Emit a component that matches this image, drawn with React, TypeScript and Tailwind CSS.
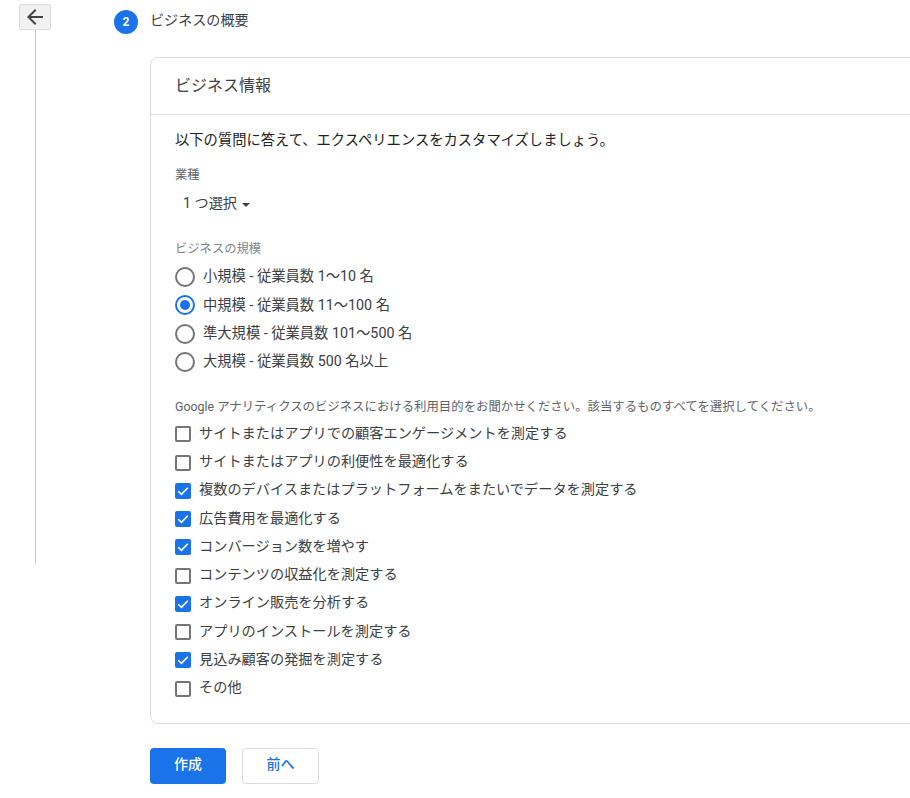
import React from 'react';

const sizes = [
  { label: '小規模 - 従業員数 1～10 名', checked: false },
  { label: '中規模 - 従業員数 11～100 名', checked: true },
  { label: '準大規模 - 従業員数 101～500 名', checked: false },
  { label: '大規模 - 従業員数 500 名以上', checked: false },
];

const purposes = [
  { label: 'サイトまたはアプリでの顧客エンゲージメントを測定する', checked: false },
  { label: 'サイトまたはアプリの利便性を最適化する', checked: false },
  { label: '複数のデバイスまたはプラットフォームをまたいでデータを測定する', checked: true },
  { label: '広告費用を最適化する', checked: true },
  { label: 'コンバージョン数を増やす', checked: true },
  { label: 'コンテンツの収益化を測定する', checked: false },
  { label: 'オンライン販売を分析する', checked: true },
  { label: 'アプリのインストールを測定する', checked: false },
  { label: '見込み顧客の発掘を測定する', checked: true },
  { label: 'その他', checked: false },
];

function Radio({ checked }: { checked: boolean }) {
  return (
    <span className={`w-5 h-5 rounded-full border-2 flex items-center justify-center shrink-0 ${checked ? 'border-[#1a73e8]' : 'border-[#757575]'}`}>
      {checked && <span className="w-2.5 h-2.5 rounded-full bg-[#1a73e8]" />}
    </span>
  );
}

function Checkbox({ checked }: { checked: boolean }) {
  if (checked) {
    return (
      <span className="w-4 h-4 rounded-[2px] bg-[#1a73e8] flex items-center justify-center shrink-0">
        <svg viewBox="0 0 16 16" className="w-4 h-4" fill="none" stroke="#fff" strokeWidth="1.6">
          <path d="M3.2 8.2 6.5 11.4 12.8 4.8" />
        </svg>
      </span>
    );
  }
  return <span className="w-4 h-4 rounded-[2px] border-2 border-[#757575] shrink-0" />;
}

export default function App() {
  return (
    <div className="w-[910px] h-[798px] overflow-hidden bg-white flex text-[#3c4043] font-['Roboto','Noto_Sans_CJK_JP',sans-serif]">
      <div className="w-[114px] shrink-0 pl-[19px] pt-1 flex flex-col">
        <button className="w-8 h-[26px] bg-[#f1f1f1] border border-[#dadce0] rounded-[2px] flex items-center justify-center">
          <svg viewBox="0 0 24 24" className="w-6 h-6 shrink-0" fill="#444">
            <path d="M20 11H7.83l5.59-5.59L12 4l-8 8 8 8 1.41-1.41L7.83 13H20v-2z" />
          </svg>
        </button>
        <div className="ml-4 w-px h-[534px] bg-[#c8c8c8]" />
      </div>
      <div className="flex-1 min-w-0">
        <div className="flex items-center h-6 mt-[10px]">
          <span className="w-6 h-6 rounded-full bg-[#1a73e8] text-white text-xs font-bold flex items-center justify-center">2</span>
          <span className="ml-3 text-[14.1px] text-[#3c4043] relative -top-px">ビジネスの概要</span>
        </div>
        <div className="ml-9 mt-[23px] w-[800px] h-[667px] border border-[#dadce0] rounded-l-lg">
          <div className="h-[57px] border-b border-[#dadce0] pl-6 flex items-center text-base text-[#3c4043]">ビジネス情報</div>
          <div className="pl-6">
            <p className="mt-[15px] text-[14.3px] leading-5 text-[#202124]">以下の質問に答えて、エクスペリエンスをカスタマイズしましょう。</p>
            <p className="mt-[17px] text-[12.2px] leading-4 text-[#5f6368]">業種</p>
            <div className="mt-[7px] h-7 pl-2 flex items-center gap-[5px] text-[14.2px] text-[#3c4043]">
              <span>1 つ選択</span>
              <span className="w-0 h-0 border-x-4 border-x-transparent border-t-4 border-t-[#3c4043] mt-0.5" />
            </div>
            <p className="mt-[23px] text-[12.3px] leading-4 text-[#80868b]">ビジネスの規模</p>
            <div className="mt-[6px] flex flex-col">
              {sizes.map((s) => (
                <label key={s.label} className="h-[28.33px] flex items-center gap-[8px] text-[14.3px] text-[#3c4043]">
                  <Radio checked={s.checked} />
                  <span>{s.label}</span>
                </label>
              ))}
            </div>
            <p className="mt-[23px] text-[12.4px] leading-4 text-[#5f6368] whitespace-nowrap">Google アナリティクスのビジネスにおける利用目的をお聞かせください。該当するものすべてを選択してください。</p>
            <div className="mt-[5px] flex flex-col">
              {purposes.map((p) => (
                <label key={p.label} className="h-[28.25px] flex items-center gap-2 text-[14.2px] text-[#3c4043] whitespace-nowrap">
                  <Checkbox checked={p.checked} />
                  <span className="relative -top-px">{p.label}</span>
                </label>
              ))}
            </div>
          </div>
        </div>
        <div className="ml-9 mt-6 flex gap-4">
          <button className="w-[76px] h-9 pb-1 rounded bg-[#1a73e8] text-white text-[14px] font-medium">作成</button>
          <button className="w-[77px] h-9 pb-1 rounded border border-[#dadce0] bg-white text-[#1a73e8] text-[14px] font-medium">前へ</button>
        </div>
      </div>
    </div>
  );
}
